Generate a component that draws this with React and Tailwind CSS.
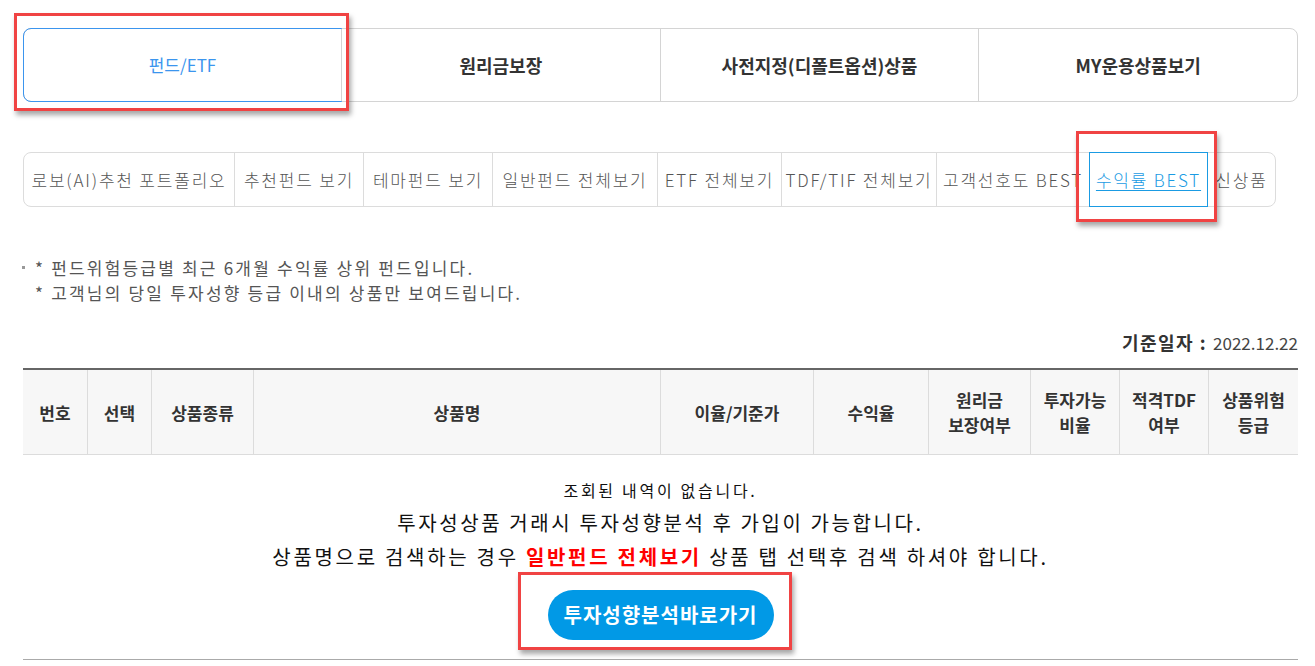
const font = { fontFamily: '"Noto Sans CJK KR", "Noto Sans", sans-serif' };

const mainTabs = ['펀드/ETF', '원리금보장', '사전지정(디폴트옵션)상품', 'MY운용상품보기'];

const subTabs = [
    { label: '로보(AI)추천 포트폴리오', w: 'w-[210px]' },
    { label: '추천펀드 보기', w: 'w-[129px]' },
    { label: '테마펀드 보기', w: 'w-[129px]' },
    { label: '일반펀드 전체보기', w: 'w-[165px]' },
    { label: 'ETF 전체보기', w: 'w-[124px]' },
    { label: 'TDF/TIF 전체보기', w: 'w-[155px]' },
    { label: '고객선호도 BEST', w: 'w-[153px]' },
    { label: '수익률 BEST', w: 'w-[119px]', active: true },
    { label: '신상품', w: 'flex-1' },
];

const columns = [
    { label: ['번호'], w: 'w-[64px]' },
    { label: ['선택'], w: 'w-[64px]' },
    { label: ['상품종류'], w: 'w-[102px]' },
    { label: ['상품명'], w: 'w-[407px]' },
    { label: ['이율/기준가'], w: 'w-[153px]' },
    { label: ['수익율'], w: 'w-[115px]' },
    { label: ['원리금', '보장여부'], w: 'w-[102px]' },
    { label: ['투자가능', '비율'], w: 'w-[89px]' },
    { label: ['적격TDF', '여부'], w: 'w-[89px]' },
    { label: ['상품위험', '등급'], w: 'flex-1' },
];

const Marker = ({ className }) => (
    <div className={`absolute border-[3px] border-[#f04343] shadow-[2px_4px_5px_rgba(0,0,0,0.35)] pointer-events-none ${className}`} />
);

export default function App() {
    return (
        <div className="relative w-[1315px] h-[666px] bg-white overflow-hidden" style={font}>
            <div className="ml-[23px] w-[1275px] pt-[28px]">
                {/* top tabs */}
                <div className="flex h-[74px] border border-[#d4d4d4] rounded-[8px]">
                    {mainTabs.map((t, i) => (
                        <div
                            key={t}
                            className={
                                i === 0
                                    ? 'w-[319px] -m-px h-[74px] flex items-center justify-center border border-[#3b95ee] rounded-l-[8px] text-[17px] text-[#3b95ee]'
                                    : 'flex-1 flex items-center justify-center border-l border-[#d4d4d4] text-[18px] font-bold text-[#333]'
                            }
                        >
                            {t}
                        </div>
                    ))}
                </div>

                {/* sub tabs */}
                <div className="mt-[50px] flex h-[55px] w-[1253px] border border-[#dcdcdc] rounded-[8px]">
                    {subTabs.map((t, i) => (
                        <div
                            key={t.label}
                            className={`${t.w} flex items-center justify-center whitespace-nowrap text-[17px] tracking-[1.8px] font-light ${
                                i > 0 && !t.active && !subTabs[i - 1].active ? 'border-l border-[#dcdcdc]' : ''
                            } ${
                                t.active
                                    ? '-my-px border border-[#1a9be3] text-[#1a9be3] underline underline-offset-[3px]'
                                    : 'text-[#555]'
                            }`}
                        >
                            {t.label}
                        </div>
                    ))}
                </div>

                {/* notes */}
                <div className="mt-[48px] text-[17px] leading-[25px] tracking-[2.2px] text-[#555]">
                    <div className="flex items-center">
                        <span className="w-[3px] h-[3px] bg-[#999] mr-[10px] -ml-[1px]" />
                        <span>* 펀드위험등급별 최근 6개월 수익률 상위 펀드입니다.</span>
                    </div>
                    <div className="pl-[12px]">* 고객님의 당일 투자성향 등급 이내의 상품만 보여드립니다.</div>
                </div>

                <div className="mt-[25px] flex justify-end items-baseline leading-[24px]">
                    <span className="text-[18px] tracking-[1.5px] font-bold text-[#333]">기준일자 :</span>
                    <span className="ml-[6px] text-[17px] text-[#444]">2022.12.22</span>
                </div>

                {/* table header */}
                <div className="mt-[13px] flex h-[87px] border-t-2 border-[#666] border-b border-b-[#dcdcdc] bg-[#f7f7f7]">
                    {columns.map((c, i) => (
                        <div
                            key={c.label.join('')}
                            className={`${c.w} flex flex-col items-center justify-center text-[17px] leading-[25px] font-bold text-[#333] ${
                                i > 0 ? 'border-l border-[#dcdcdc]' : ''
                            }`}
                        >
                            {c.label.map((l) => (
                                <span key={l}>{l}</span>
                            ))}
                        </div>
                    ))}
                </div>

                {/* empty body */}
                <div className="flex flex-col items-center text-[#111] border-b border-[#aaa] h-[205px]">
                    <div className="mt-[23px] text-[16px] leading-[24px] tracking-[2.7px]">조회된 내역이 없습니다.</div>
                    <div className="mt-[6px] text-[20px] leading-[30px] tracking-[2.6px]">투자성상품 거래시 투자성향분석 후 가입이 가능합니다.</div>
                    <div className="mt-[4px] text-[20px] leading-[30px] tracking-[2.7px]">
                        상품명으로 검색하는 경우 <span className="font-bold text-[#f00]">일반펀드 전체보기</span> 상품 탭 선택후 검색 하셔야 합니다.
                    </div>
                    <button className="mt-[18px] w-[226px] h-[50px] rounded-full bg-[#0199e6] text-white text-[20px] tracking-[1px] font-bold">
                        투자성향분석바로가기
                    </button>
                </div>
            </div>

            <Marker className="left-[14px] top-[13px] w-[335px] h-[98px]" />
            <Marker className="left-[1076px] top-[131px] w-[141px] h-[91px]" />
            <Marker className="left-[518px] top-[572px] w-[274px] h-[78px]" />
        </div>
    );
}
